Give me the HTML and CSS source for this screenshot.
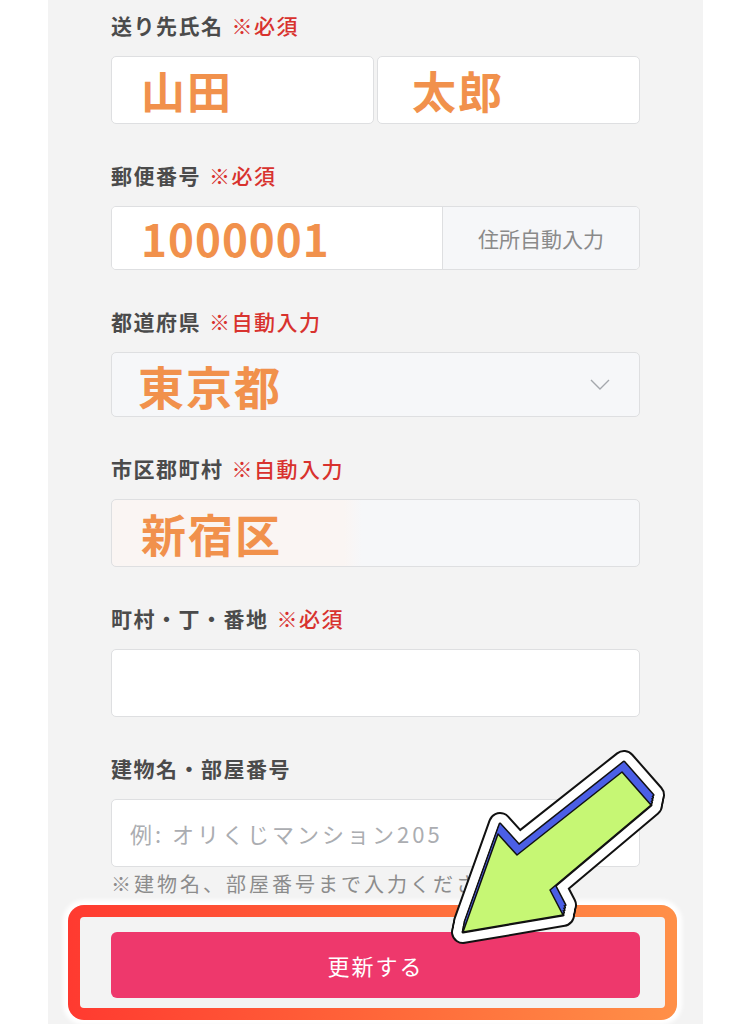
FILE: index.html
```html
<!DOCTYPE html>
<html lang="ja">
<head>
<meta charset="utf-8">
<title>送り先住所</title>
<link rel="stylesheet" href="styles.css">
</head>
<body>
<div class="panel">
  <div class="field">
    <div class="label">送り先氏名<span class="req">※必須</span></div>
    <div class="name-row">
      <div class="input value first">山田</div>
      <div class="input value second">太郎</div>
    </div>
  </div>

  <div class="field">
    <div class="label">郵便番号<span class="req">※必須</span></div>
    <div class="postal">
      <div class="postal-value value">1000001</div>
      <div class="postal-btn">住所自動入力</div>
    </div>
  </div>

  <div class="field">
    <div class="label">都道府県<span class="req">※自動入力</span></div>
    <div class="input disabled select value">
      <span>東京都</span>
      <svg class="chev" width="22" height="14" viewBox="0 0 22 14"><polyline points="2,2 11,11 20,2" fill="none" stroke="#a5a8ad" stroke-width="1.4"/></svg>
    </div>
  </div>

  <div class="field">
    <div class="label">市区郡町村<span class="req">※自動入力</span></div>
    <div class="input disabled city value">新宿区</div>
  </div>

  <div class="field">
    <div class="label">町村・丁・番地<span class="req">※必須</span></div>
    <div class="input"></div>
  </div>

  <div class="field last">
    <div class="label">建物名・部屋番号</div>
    <div class="input placeholder">例: オリくじマンション205</div>
    <div class="note">※建物名、部屋番号まで入力ください</div>
  </div>

  <div class="frame">
    <button class="submit">更新する</button>
  </div>
</div>

<svg class="arrow" width="751" height="1024" viewBox="0 0 751 1024">
  <defs>
    <polygon id="arr" points="463,932 498,834 517,855 622,772 651,805 550,890 563,915"/>
  </defs>
  <g stroke-linejoin="round">
    <g fill="#000" stroke="#111" stroke-width="24">
      <use href="#arr"/>
      <use href="#arr" transform="translate(1,-5)"/>
      <use href="#arr" transform="translate(2,-10)"/>
    </g>
    <g fill="#fff" stroke="#fff" stroke-width="20">
      <use href="#arr"/>
      <use href="#arr" transform="translate(1,-5)"/>
      <use href="#arr" transform="translate(2,-10)"/>
    </g>
    <g fill="none" stroke="#111" stroke-width="3">
      <use href="#arr"/>
      <use href="#arr" transform="translate(0.5,-2.5)"/>
      <use href="#arr" transform="translate(1,-5)"/>
      <use href="#arr" transform="translate(1.5,-7.5)"/>
      <use href="#arr" transform="translate(2,-10)"/>
    </g>
    <g fill="#4b5fe6">
      <use href="#arr"/>
      <use href="#arr" transform="translate(0.5,-2.5)"/>
      <use href="#arr" transform="translate(1,-5)"/>
      <use href="#arr" transform="translate(1.5,-7.5)"/>
      <use href="#arr" transform="translate(2,-10)"/>
    </g>
    <use href="#arr" fill="#c6f774" stroke="#111" stroke-width="1.5"/>
  </g>
</svg>
</body>
</html>
```

FILE: styles.css
```css
html, body {
  margin: 0;
  padding: 0;
  background: #ffffff;
}

body {
  position: relative;
  width: 751px;
  min-height: 1024px;
  font-family: "Noto Sans CJK JP", "Noto Sans", sans-serif;
}

.panel {
  margin-left: 48px;
  width: 655px;
  min-height: 1024px;
  box-sizing: border-box;
  background: #f3f3f3;
  padding: 13px 0 0 63px;
}

.field {
  margin-bottom: 39px;
}

.field.last {
  margin-bottom: 0;
}

.label {
  height: 24px;
  line-height: 24px;
  font-size: 21px;
  font-weight: 700;
  color: #4b4b4b;
  letter-spacing: 1.5px;
  margin-bottom: 19px;
  white-space: nowrap;
}

.req {
  color: #d8322e;
  font-weight: 500;
  margin-left: 8px;
}

.input {
  width: 529px;
  height: 68px;
  box-sizing: border-box;
  border: 1.5px solid #dedfe1;
  border-radius: 5px;
  background: #ffffff;
  display: flex;
  align-items: center;
}

.value {
  font-size: 44px;
  font-weight: 700;
  color: #f1914c;
  letter-spacing: 2px;
}

.name-row {
  display: flex;
  gap: 3px;
}

.name-row .input {
  width: 263px;
}

.name-row .first {
  padding-left: 29px;
}

.name-row .second {
  padding-left: 34px;
}

.postal {
  width: 529px;
  height: 64px;
  box-sizing: border-box;
  border: 1.5px solid #dedfe1;
  border-radius: 5px;
  display: flex;
  overflow: hidden;
}

.postal-value {
  width: 330px;
  background: #ffffff;
  display: flex;
  align-items: center;
  padding-left: 29px;
  box-sizing: border-box;
  letter-spacing: 1px;
}

.postal-btn {
  flex: 1;
  background: #f6f7f9;
  border-left: 1.5px solid #dedfe1;
  display: flex;
  align-items: center;
  justify-content: center;
  font-size: 21px;
  color: #8a8a8a;
}

.disabled {
  background: #f6f7f9;
}

.select {
  height: 65px;
  padding-left: 26px;
  padding-right: 28px;
  font-size: 46px;
}

.chev {
  margin-left: auto;
}

.city {
  padding-left: 29px;
  font-size: 45px;
  background: linear-gradient(90deg, #faf5f3 0, #faf5f3 232px, #f6f7f9 250px);
}

.placeholder {
  padding-left: 18px;
  font-size: 22px;
  color: #abadb1;
  letter-spacing: 3px;
}

.note {
  margin-top: 5px;
  height: 24px;
  line-height: 24px;
  font-size: 20px;
  color: #8c8c8c;
  letter-spacing: 3px;
  white-space: nowrap;
}

.frame {
  margin-top: 9px;
  margin-left: -43px;
  width: 609px;
  box-sizing: border-box;
  border: 12px solid transparent;
  border-radius: 16px;
  padding: 15px 25px 10px 31px;
  background:
    linear-gradient(#f3f3f3, #f3f3f3) padding-box,
    linear-gradient(90deg, #ff3a30 0%, #ff6a3a 55%, #ff9048 100%) border-box;
  box-shadow: 0 0 4px 5px #ffffff;
}

.submit {
  display: block;
  width: 529px;
  height: 66px;
  border: none;
  border-radius: 6px;
  background: #ee386c;
  color: #ffffff;
  font-family: "Noto Sans CJK JP", sans-serif;
  font-size: 22px;
  letter-spacing: 2px;
  padding: 0;
}

.arrow {
  position: absolute;
  top: 0;
  left: 0;
  pointer-events: none;
}
```
